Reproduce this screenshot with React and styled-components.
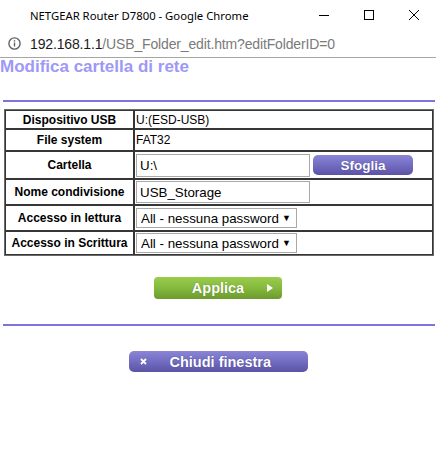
import React from 'react'
import styled, { createGlobalStyle } from 'styled-components'

const GlobalStyle = createGlobalStyle`
  html, body {
    margin: 0;
    padding: 0;
    background: #fff;
  }
  body {
    font-family: "Liberation Sans", Arial, sans-serif;
    width: 436px;
    height: 457px;
    overflow: hidden;
  }
`

const TitleBar = styled.div`
  height: 30px;
  display: flex;
  align-items: center;
  background: #fff;
`

const TitleText = styled.div`
  flex: 1;
  padding-left: 30px;
  font-family: "Noto Sans", "Open Sans", sans-serif;
  font-size: 11.3px;
  color: #000;
  white-space: nowrap;
`

const WindowControls = styled.div`
  display: flex;
  height: 30px;
`

const ControlButton = styled.div`
  width: 45px;
  height: 30px;
  display: flex;
  align-items: center;
  justify-content: center;
`

const AddressBar = styled.div`
  height: 27px;
  display: flex;
  align-items: center;
  gap: 9px;
  padding-left: 8px;
  border-bottom: 1px solid #a6a6a6;
`

const Url = styled.div`
  font-family: "Liberation Sans", Arial, sans-serif;
  font-size: 14px;
  color: #7a7a7a;
  white-space: nowrap;
  letter-spacing: -0.15px;
`

const UrlHost = styled.span`
  color: #1a1a1a;
`

const Page = styled.div`
  padding-top: 0;
`

const Heading = styled.h1`
  margin: 0;
  height: 18px;
  font-size: 17px;
  line-height: 18px;
  font-weight: bold;
  color: #9e98f7;
`

const Rule = styled.div`
  height: 2px;
  margin: ${p => p.$top}px 1px 0 3px;
  background: #7c74dc;
`

const FormTable = styled.table`
  margin: 7px 0 0 4px;
  width: 430px;
  border-collapse: separate;
  border-spacing: 0;
  border: 1px solid #6a6a6a;
  table-layout: fixed;
`

const Row = styled.tr`
  height: ${p => p.$h}px;
`

const LabelCell = styled.td`
  width: 129px;
  box-sizing: border-box;
  border: 1px solid #363636;
  padding: 0 1px;
  text-align: center;
  vertical-align: middle;
  font-size: 12px;
  font-weight: bold;
  color: #000;
  white-space: nowrap;
`

const ValueCell = styled.td`
  box-sizing: border-box;
  border: 1px solid #363636;
  padding: 0 1px;
  vertical-align: middle;
  font-size: 12px;
  color: #000;
  white-space: nowrap;
`

const FieldLine = styled.div`
  display: flex;
  align-items: center;
`

const TextInput = styled.input`
  box-sizing: border-box;
  width: 174px;
  height: ${p => p.$h || 22}px;
  margin: 0;
  padding: 0 3px;
  border: 1px solid #a9a9a9;
  font-family: "Liberation Sans", Arial, sans-serif;
  font-size: 13.33px;
  color: #000;
  outline: none;
`

const SelectWrap = styled.div`
  position: relative;
  width: 161px;
  height: 20px;
`

const Select = styled.select`
  appearance: none;
  box-sizing: border-box;
  width: 161px;
  height: 20px;
  margin: 0;
  padding: 0 0 0 4px;
  border: 1px solid #a9a9a9;
  border-radius: 0;
  background: #fff;
  font-family: "Liberation Sans", Arial, sans-serif;
  font-size: 13.33px;
  color: #000;
  outline: none;
`

const SelectArrow = styled.span`
  position: absolute;
  right: 6px;
  top: 4px;
  font-size: 9px;
  line-height: 12px;
  color: #000;
  pointer-events: none;
`

const PurpleButton = styled.button`
  box-sizing: border-box;
  display: flex;
  align-items: center;
  justify-content: ${p => (p.$icon ? 'flex-start' : 'center')};
  width: ${p => p.$w}px;
  height: ${p => p.$h}px;
  margin: 0 0 0 ${p => p.$ml || 0}px;
  padding: 0 ${p => (p.$icon ? 11 : 0)}px;
  border: none;
  border-radius: 5px;
  background: linear-gradient(to bottom, #8b85d6 0%, #736dc2 50%, #5a53a5 100%);
  color: #fff;
  font-family: "Liberation Sans", Arial, sans-serif;
  font-size: ${p => p.$fs || 13.5}px;
  font-weight: bold;
  text-shadow: 0 0 1px #3b3680;
  cursor: pointer;
`

const CloseMark = styled.svg`
  flex: none;
  margin-right: 23px;
`

const GreenButton = styled.button`
  box-sizing: border-box;
  position: relative;
  display: flex;
  align-items: center;
  justify-content: center;
  width: 128px;
  height: 22px;
  margin: 0;
  padding: 0;
  border: none;
  border-radius: 4px;
  background: linear-gradient(to bottom, #9bcd4c 0%, #85b93d 50%, #6c9a2d 100%);
  color: #fff;
  font-family: "Liberation Sans", Arial, sans-serif;
  font-size: 14.5px;
  font-weight: bold;
  text-shadow: 0 0 1px #4a6e1a;
  cursor: pointer;
`

const PlayMark = styled.span`
  position: absolute;
  right: 9px;
  top: 7px;
  width: 0;
  height: 0;
  border-top: 4px solid transparent;
  border-bottom: 4px solid transparent;
  border-left: 6px solid #fff;
`

const ButtonRow = styled.div`
  display: flex;
  justify-content: center;
  margin-top: ${p => p.$top}px;
`

const InfoIcon = () =>
  <svg width="13" height="13" viewBox="0 0 13 13">
    <circle cx="6.5" cy="6.5" r="5.6" fill="none" stroke="#5f6368" strokeWidth="1.4" />
    <rect x="5.8" y="5.5" width="1.4" height="4" fill="#5f6368" />
    <rect x="5.8" y="3.2" width="1.4" height="1.4" fill="#5f6368" />
  </svg>

const accessOptions = ['All - nessuna password']

const App = () =>
  <>
    <GlobalStyle />
    <TitleBar>
      <TitleText>NETGEAR Router D7800 - Google Chrome</TitleText>
      <WindowControls>
        <ControlButton>
          <svg width="10" height="10" viewBox="0 0 10 10"><line x1="0" y1="5.5" x2="10" y2="5.5" stroke="#000" strokeWidth="1" /></svg>
        </ControlButton>
        <ControlButton>
          <svg width="10" height="10" viewBox="0 0 10 10"><rect x="0.5" y="0.5" width="9" height="9" fill="none" stroke="#000" strokeWidth="1" /></svg>
        </ControlButton>
        <ControlButton>
          <svg width="10" height="10" viewBox="0 0 10 10"><path d="M0 0 L10 10 M10 0 L0 10" stroke="#000" strokeWidth="1" /></svg>
        </ControlButton>
      </WindowControls>
    </TitleBar>
    <AddressBar>
      <InfoIcon />
      <Url><UrlHost>192.168.1.1</UrlHost>/USB_Folder_edit.htm?editFolderID=0</Url>
    </AddressBar>
    <Page>
      <Heading>Modifica cartella di rete</Heading>
      <Rule $top={24} />
      <FormTable>
        <tbody>
          <Row $h={19}>
            <LabelCell>Dispositivo USB</LabelCell>
            <ValueCell>U:(ESD-USB)</ValueCell>
          </Row>
          <Row $h={22}>
            <LabelCell>File system</LabelCell>
            <ValueCell>FAT32</ValueCell>
          </Row>
          <Row $h={28}>
            <LabelCell>Cartella</LabelCell>
            <ValueCell>
              <FieldLine>
                <TextInput $h={23} defaultValue="U:\" readOnly />
                <PurpleButton $w={100} $h={20} $ml={3}>Sfoglia</PurpleButton>
              </FieldLine>
            </ValueCell>
          </Row>
          <Row $h={26}>
            <LabelCell>Nome condivisione</LabelCell>
            <ValueCell>
              <TextInput $h={22} defaultValue="USB_Storage" />
            </ValueCell>
          </Row>
          <Row $h={26}>
            <LabelCell>Accesso in lettura</LabelCell>
            <ValueCell>
              <SelectWrap>
                <Select defaultValue={accessOptions[0]}>
                  {accessOptions.map(o => <option key={o}>{o}</option>)}
                </Select>
                <SelectArrow>▼</SelectArrow>
              </SelectWrap>
            </ValueCell>
          </Row>
          <Row $h={24}>
            <LabelCell>Accesso in Scrittura</LabelCell>
            <ValueCell>
              <SelectWrap>
                <Select defaultValue={accessOptions[0]}>
                  {accessOptions.map(o => <option key={o}>{o}</option>)}
                </Select>
                <SelectArrow>▼</SelectArrow>
              </SelectWrap>
            </ValueCell>
          </Row>
        </tbody>
      </FormTable>
      <ButtonRow $top={21}>
        <GreenButton>Applica<PlayMark /></GreenButton>
      </ButtonRow>
      <Rule $top={25} />
      <ButtonRow $top={25}>
        <PurpleButton $w={179} $h={21} $fs={14.5} $icon>
          <CloseMark width="7" height="7" viewBox="0 0 7 7">
            <path d="M1 1 L6 6 M6 1 L1 6" stroke="#fff" strokeWidth="1.8" />
          </CloseMark>
          Chiudi finestra
        </PurpleButton>
      </ButtonRow>
    </Page>
  </>

export default App
